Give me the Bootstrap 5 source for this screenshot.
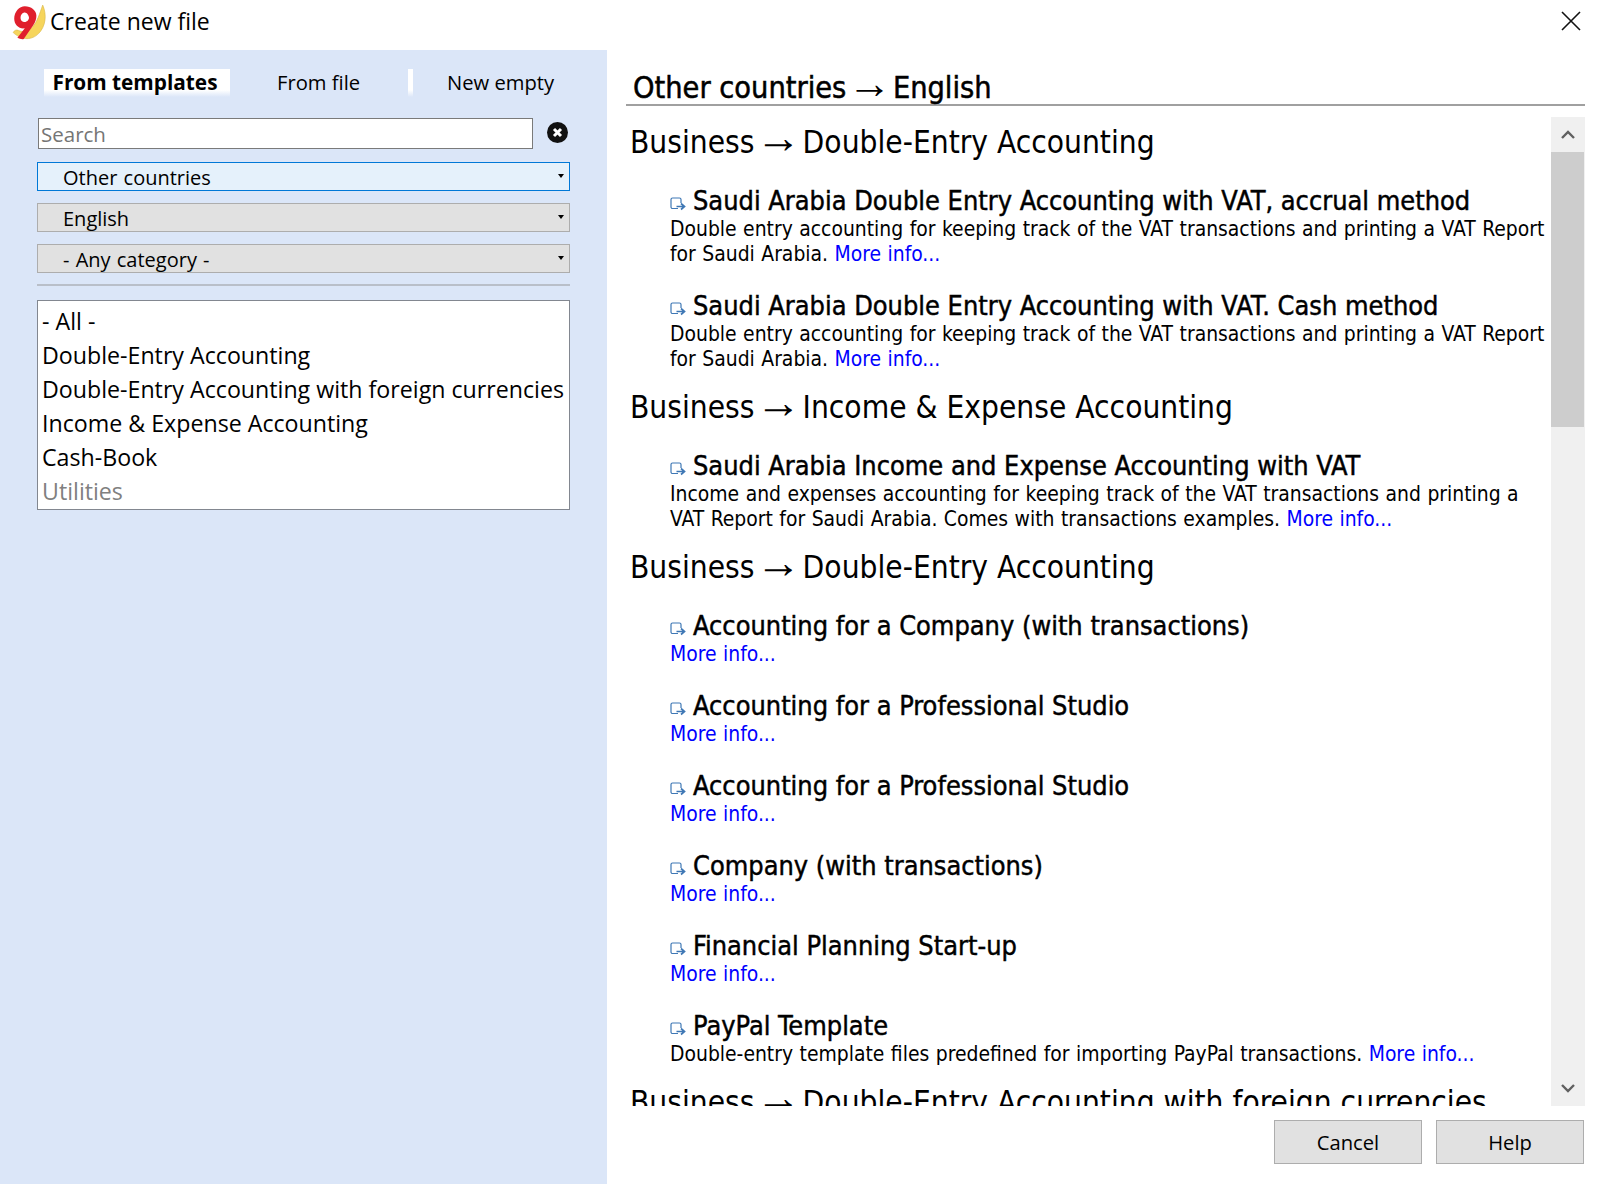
<!DOCTYPE html>
<html lang="en">
<head>
    <meta charset="UTF-8">
    <meta name="viewport" content="width=device-width, initial-scale=1.0">
    <title>Create new file</title>
    <link rel="stylesheet" href="https://cdn.jsdelivr.net/npm/bootstrap@5.3.0/dist/css/bootstrap.min.css">
    <style>
        html, body { height: 100%; }
        body { overflow: hidden; background: #fff; color: #000; font-family: "Open Sans", "Noto Sans", sans-serif; }
        .title-bar { height: 50px; padding: 0 0 7px 12px; }
        .title-text { font-size: 23px; margin-left: 4px; }
        .close-x { margin-right: 22px; margin-top: -2px; }
        .main-area { height: 1134px; }
        .side-panel { width: 607px; background: #dbe6f8; padding: 19px 37px 0; }
        .tab-item { font-size: 20.2px; line-height: 26px; height: 28px; color: #000; }
        .tab-active { font-size: 20.8px; font-weight: 700; background: linear-gradient(#fff 75%, #dbe6f8); width: 186px; margin-left: 7px; padding-right: 4px; text-align: center; }
        .tab-file { margin-left: 47px; width: 131px; }
        .tab-sep { width: 5px; height: 28px; background: linear-gradient(#fff 75%, #dbe6f8); }
        .tab-new { margin-left: 34px; }
        .search-box { width: 495px; height: 31px; margin-left: 1px; background: #fff; border: 1px solid #7a7a7a; color: #757575; font-size: 20.5px; line-height: 30px; padding-left: 2px; }
        .clear-btn { margin-left: 14px; margin-top: -2px; }
        .combo-box { width: 533px; height: 29px; padding: 2px 2px 0 25px; font-size: 20px; line-height: 25px; border: 1px solid #adadad; background: #e1e1e1; color: #000; border-radius: 0; text-align: left; word-spacing: 1px; }
        .combo-box::after { border-top-width: 4px; border-left-width: 3.5px; border-right-width: 3.5px; margin-bottom: 3px; margin-right: 3px; }
        .combo-focus { background: #e5f1fb; border-color: #0078d7; }
        .side-rule { width: 533px; height: 2px; background: #b9bfc9; margin-top: 11px; margin-bottom: 14px; }
        .list-box { width: 533px; height: 210px; background: #fff; border: 1px solid #828790; padding: 3px 0 0 4px; }
        .list-row { font-size: 23.2px; line-height: 34px; white-space: nowrap; }
        .list-off { color: #808080; }
        .content-side { padding: 0 19px 0 19px; min-width: 0; }
        .page-head { height: 56px; border-bottom: 2px solid #a0a0a0; padding-left: 7px; font-family: "DejaVu Sans Condensed", "DejaVu Sans", sans-serif; font-size: 30.4px; line-height: 36px; padding-top: 18px; font-weight: 500; -webkit-text-stroke: 0.5px #000; }
        .arrow-glyph { font-family: "Liberation Sans", sans-serif; font-size: 1.45em; line-height: .7; word-spacing: -.25em; white-space: pre; -webkit-text-stroke: 0; }
        .scroll-wrap { height: 989px; margin-top: 11px; }
        .scroll-pane { overflow: hidden; min-width: 0; padding: 5px 0 0 4px; font-family: "DejaVu Sans Condensed", "DejaVu Sans", sans-serif; }
        .group-head { font-size: 31.4px; line-height: 40px; margin: 15px 0 22px; font-weight: 400; white-space: nowrap; }
        .group-head:first-child { margin-top: 0; }
        .tpl-item { margin-left: 40px; white-space: nowrap; }
        .tpl-item + .tpl-item { margin-top: 22px; }
        .tpl-title { font-size: 26.9px; line-height: 30px; padding: 2px 0 1px; -webkit-text-stroke: 0.45px #000; }
        .tpl-icon { width: 16px; height: 16px; margin-right: 7px; vertical-align: -2px; }
        .tpl-desc { font-size: 20.9px; line-height: 25px; word-spacing: .5px; }
        .more-link { color: #0000ff; text-decoration: none; }
        .scroll-rail { width: 34px; background: #f0f0f0; }
        .scroll-arrow { height: 35px; }
        .scroll-thumb { height: 275px; background: #cdcdcd; margin-right: 1px; }
        .foot-btn { width: 148px; height: 44px; background: #e1e1e1; border: 1px solid #adadad; border-radius: 0; color: #000; font-size: 20.2px; padding: 1px 0 0; font-family: "Open Sans", sans-serif; }
        .foot-row { padding: 0 1px 20px 0; }
        .foot-row .foot-btn:first-child { margin-right: 6px; }
    </style>
</head>
<body>
    <div class="title-bar d-flex align-items-center">
        <svg width="34" height="38" viewBox="13 2 32 36">
            <path d="M42 4c4 9 3 20-4 27-6 6-15 7-24-1 1-2 3-3 5-2 4 2 9 1 13-3 5-5 7-13 10-21z" fill="#f6d55c" stroke="#d9b84a" stroke-width=".6"/>
            <path fill="#e01f2d" fill-rule="evenodd" d="M25 5c6 0 11 4 11 9 0 3-1 6-3 9l-9 13c-1 1-4 0-6-1l7-9c-5 1-10-3-10-9 0-7 5-12 10-12zm0 6c-2 0-4 2-4 5s2 4 4 4 4-2 4-4-2-5-4-5z"/>
        </svg>
        <span class="title-text">Create new file</span>
        <svg class="close-x ms-auto" width="22" height="22" viewBox="0 0 22 22"><path d="M2 2l18 18M20 2L2 20" stroke="#111" stroke-width="1.6" fill="none"/></svg>
    </div>

    <div class="main-area d-flex">
        <!-- filters -->
        <div class="side-panel flex-shrink-0">
            <div class="d-flex">
                <div class="tab-item tab-active">From templates</div>
                <div class="tab-item tab-file">From file</div>
                <div class="tab-sep"></div>
                <div class="tab-item tab-new">New empty</div>
            </div>
            <div class="d-flex align-items-center" style="margin-top:21px">
                <div class="search-box">Search</div>
                <svg class="clear-btn" width="21" height="21" viewBox="0 0 21 21">
                    <circle cx="10.5" cy="10.5" r="10.5" fill="#111"/>
                    <path d="M7 7l7 7M14 7l-7 7" stroke="#fff" stroke-width="3"/>
                </svg>
            </div>
            <div class="d-flex flex-column">
                <button class="combo-box combo-focus btn dropdown-toggle d-flex align-items-center justify-content-between" style="margin-top:13px">Other countries</button>
                <button class="combo-box btn dropdown-toggle d-flex align-items-center justify-content-between" style="margin-top:12px">English</button>
                <button class="combo-box btn dropdown-toggle d-flex align-items-center justify-content-between" style="margin-top:12px">- Any category -</button>
            </div>
            <div class="side-rule"></div>
            <div class="list-box">
                <div class="list-row">- All -</div>
                <div class="list-row">Double-Entry Accounting</div>
                <div class="list-row">Double-Entry Accounting with foreign currencies</div>
                <div class="list-row">Income &amp; Expense Accounting</div>
                <div class="list-row">Cash-Book</div>
                <div class="list-row list-off">Utilities</div>
            </div>
        </div>

        <!-- template list -->
        <div class="content-side flex-grow-1 d-flex flex-column">
            <div class="page-head">Other countries<span class="arrow-glyph"> → </span>English</div>
            <div class="scroll-wrap d-flex">
                <div class="scroll-pane flex-grow-1" id="templates"></div>
                <div class="scroll-rail d-flex flex-column flex-shrink-0">
                    <div class="scroll-arrow d-flex align-items-center justify-content-center">
                        <svg width="14" height="9" viewBox="0 0 14 9"><path d="M1 8l6-6 6 6" stroke="#606060" stroke-width="2.4" fill="none"/></svg>
                    </div>
                    <div class="scroll-thumb"></div>
                    <div class="flex-grow-1"></div>
                    <div class="scroll-arrow d-flex align-items-center justify-content-center">
                        <svg width="14" height="9" viewBox="0 0 14 9"><path d="M1 1l6 6 6-6" stroke="#606060" stroke-width="2.4" fill="none"/></svg>
                    </div>
                </div>
            </div>
            <div class="foot-row d-flex justify-content-end gap-2 mt-auto">
                <button class="foot-btn btn">Cancel</button>
                <button class="foot-btn btn">Help</button>
            </div>
        </div>
    </div>

    <script>
        // list data, the same icon and link on each row
        const arrow = '<span class="arrow-glyph"> → </span>';
        const vatText = 'Double entry accounting for keeping track of the VAT transactions and printing a VAT Report<br>for Saudi Arabia.';
        const groups = [
            [`Business${arrow}Double-Entry Accounting`, [
                ['Saudi Arabia Double Entry Accounting with VAT, accrual method', vatText],
                ['Saudi Arabia Double Entry Accounting with VAT. Cash method', vatText]
            ]],
            [`Business${arrow}Income &amp; Expense Accounting`, [
                ['Saudi Arabia Income and Expense Accounting with VAT', 'Income and expenses accounting for keeping track of the VAT transactions and printing a<br>VAT Report for Saudi Arabia. Comes with transactions examples.']
            ]],
            [`Business${arrow}Double-Entry Accounting`, [
                ['Accounting for a Company (with transactions)', ''],
                ['Accounting for a Professional Studio', ''],
                ['Accounting for a Professional Studio', ''],
                ['Company (with transactions)', ''],
                ['Financial Planning Start-up', ''],
                ['PayPal Template', 'Double-entry template files predefined for importing PayPal transactions.']
            ]],
            [`Business${arrow}Double-Entry Accounting with foreign currencies`, []]
        ];
        const icon = '<svg class="tpl-icon" viewBox="0 0 16 16"><path d="M8 12.5H2.5a1.5 1.5 0 0 1-1.5-1.5V3.5A1.5 1.5 0 0 1 2.5 2h7A1.5 1.5 0 0 1 11 3.5V7" fill="none" stroke="#3f78b5" stroke-width="1.2"/><path d="M6.5 10.5h7M11 7.5l3.5 3-3.5 3" fill="none" stroke="#3f78b5" stroke-width="1.7"/></svg>';
        let html = '';
        groups.forEach(([head, items]) => {
            html += `<h2 class="group-head">${head}</h2>`;
            items.forEach(([title, desc]) => {
                html += `<div class="tpl-item"><div class="tpl-title">${icon}${title}</div>` +
                    `<div class="tpl-desc">${desc}${desc ? ' ' : ''}<a class="more-link" href="#">More info...</a></div></div>`;
            });
        });
        document.getElementById('templates').innerHTML = html;
    </script>
    <script src="https://cdn.jsdelivr.net/npm/bootstrap@5.3.0/dist/js/bootstrap.bundle.min.js"></script>
</body>
</html>
